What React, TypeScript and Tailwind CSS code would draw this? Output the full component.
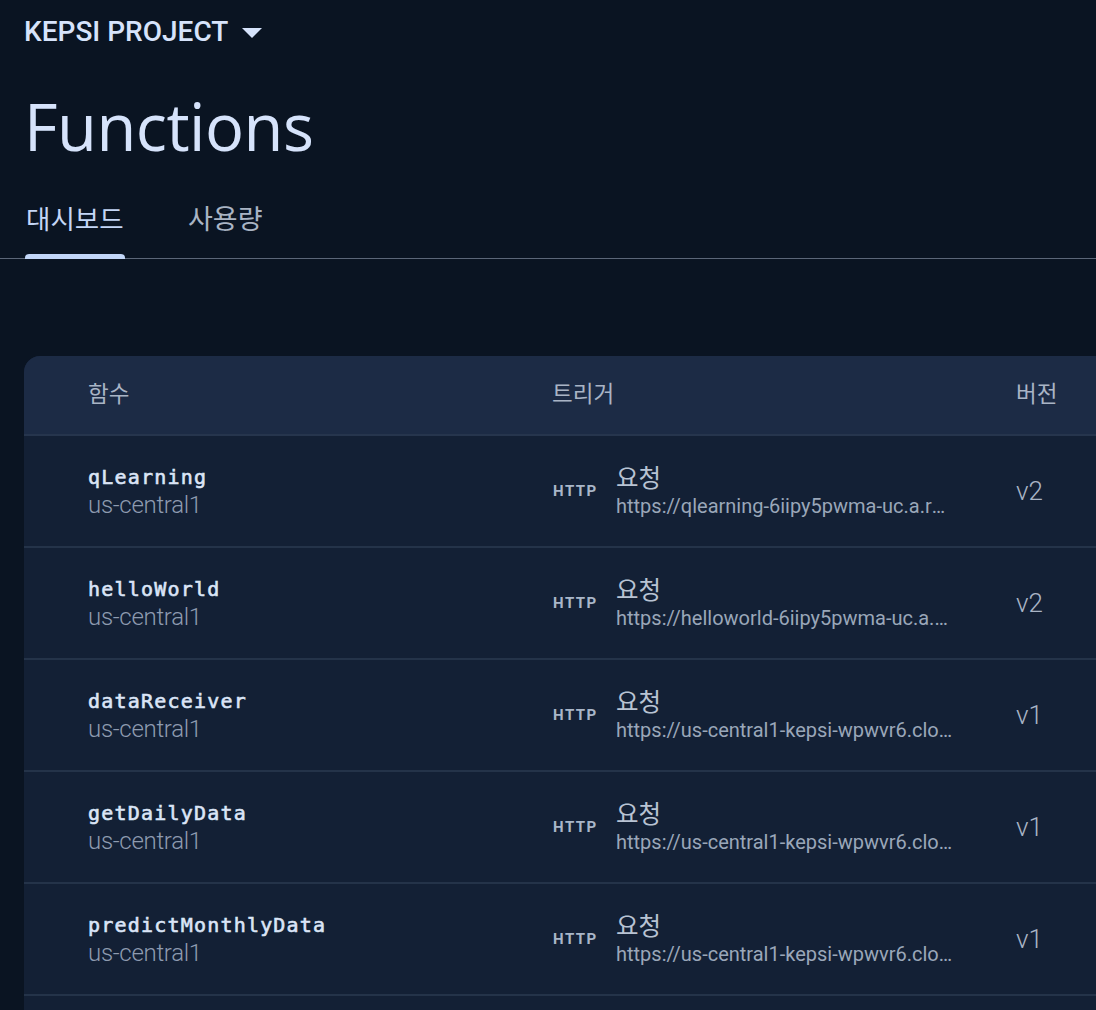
import React from "react";

const rows = [
  { name: "qLearning", url: "https://qlearning-6iipy5pwma-uc.a.run.app", ver: "v2" },
  { name: "helloWorld", url: "https://helloworld-6iipy5pwma-uc.a.run.app", ver: "v2" },
  { name: "dataReceiver", url: "https://us-central1-kepsi-wpwvr6.cloudfunctions.net/dataReceiver", ver: "v1" },
  { name: "getDailyData", url: "https://us-central1-kepsi-wpwvr6.cloudfunctions.net/getDailyData", ver: "v1" },
  { name: "predictMonthlyData", url: "https://us-central1-kepsi-wpwvr6.cloudfunctions.net/predictMonthlyData", ver: "v1" },
  { name: "sendNotification", url: "https://us-central1-kepsi-wpwvr6.cloudfunctions.net/sendNotification", ver: "v1" },
];

const kr = { fontFamily: 'Roboto, "Noto Sans CJK KR", sans-serif' };

export default function App() {
  return (
    <div className="w-[1096px] h-[1010px] overflow-hidden bg-[#0a1422]" style={kr}>
      <div className="pl-6 pt-[13px]">
        <div className="flex items-center h-[38px]">
          <span className="text-[28px] font-medium text-[#d6e3fb]">KEPSI PROJECT</span>
          <svg className="ml-[14px] mt-[2px]" width="20" height="10" viewBox="0 0 20 10">
            <path d="M0 0 L20 0 L10 10 Z" fill="#d6e3fb" />
          </svg>
        </div>
        <h1
          className="mt-[43px] text-[65px] leading-[64px] text-[#d6e3fb] font-normal tracking-[-0.5px]"
          style={{ fontFamily: '"Open Sans", Roboto, sans-serif' }}
        >
          Functions
        </h1>
      </div>
      <div className="mt-[46px] pl-6 flex border-b border-[#5b6678] relative">
        <div className="w-[101px] relative pb-[22px]">
          <span className="text-[26.5px] leading-[32px] text-[#c4d6f6] pl-[2px]">대시보드</span>
          <div className="absolute left-[1px] bottom-[-1px] w-[100px] h-[5px] rounded-t-[4px] bg-[#c2d6f8]" />
        </div>
        <div className="ml-[63px] pb-[22px]">
          <span className="text-[27px] leading-[32px] text-[#a9b4c4]">사용량</span>
        </div>
      </div>
      <div className="ml-6 mt-[97px] w-[1140px] rounded-tl-[16px] overflow-hidden bg-[#132035]">
        <div className="h-[80px] bg-[#1c2b45] flex items-center border-b-2 border-[#26354d] text-[22.5px] text-[#a9b4c5]">
          <div className="pl-16 w-[528px]">함수</div>
          <div className="w-[464px]">트리거</div>
          <div>버전</div>
        </div>
        {rows.map((r) => (
          <div key={r.name} className="h-[112px] flex items-center border-b-2 border-[#243349]">
            <div className="pl-16 w-[528px] flex flex-col">
              <span
                className="text-[20px] leading-[28px] font-normal text-[#dbe5f7] tracking-[1.2px] [-webkit-text-stroke:0.6px_#dbe5f7]"
                style={{ fontFamily: '"DejaVu Sans Mono", "Liberation Mono", monospace' }}
              >
                {r.name}
              </span>
              <span className="text-[24px] leading-[28px] text-[#8e9bb0] font-light tracking-[-0.3px]">us-central1</span>
            </div>
            <div className="w-[464px] flex items-center">
              <span className="w-[64px] text-[15px] font-bold text-[#a9b6c9] tracking-[1.5px] pl-[1px]">HTTP</span>
              <div className="flex flex-col">
                <span className="text-[24.5px] leading-[30px] text-[#b8c3d3]">요청</span>
                <span className="text-[20px] leading-[24px] text-[#9aa7b9] w-[337px] truncate">{r.url}</span>
              </div>
            </div>
            <div className="text-[26px] text-[#a9b4c5] font-light">{r.ver}</div>
          </div>
        ))}
      </div>
    </div>
  );
}
